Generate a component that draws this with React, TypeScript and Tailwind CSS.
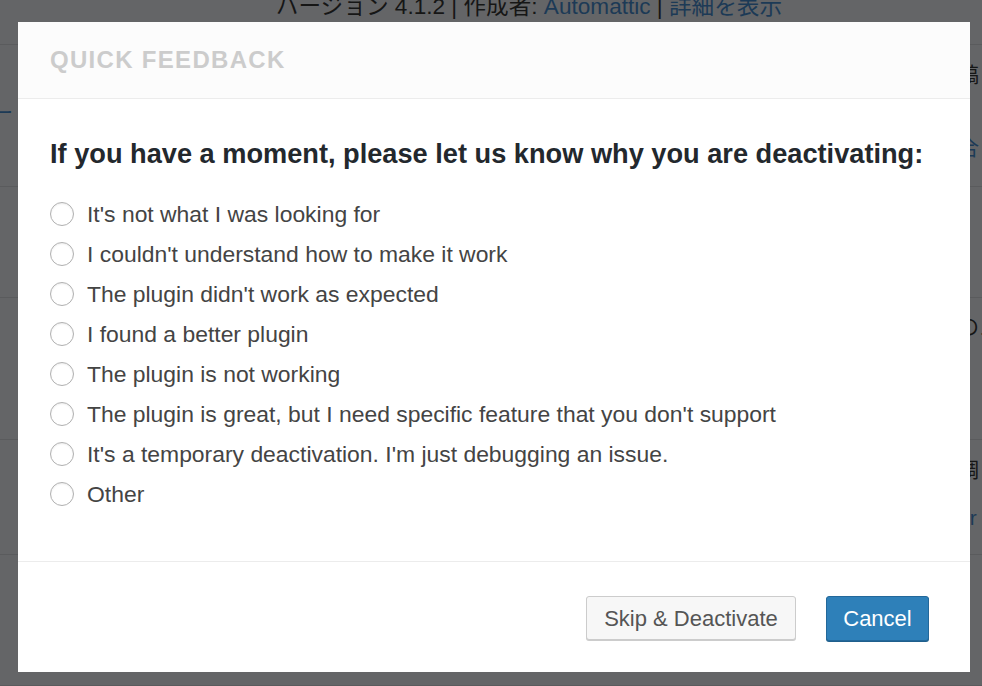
import { useState } from 'react';

const reasons = [
  "It's not what I was looking for",
  "I couldn't understand how to make it work",
  "The plugin didn't work as expected",
  'I found a better plugin',
  'The plugin is not working',
  "The plugin is great, but I need specific feature that you don't support",
  "It's a temporary deactivation. I'm just debugging an issue.",
  'Other',
];

// dimmed plugin list rows behind the modal
const rows = [
  { h: 'h-[142px]', left: 'ー', right: [{ t: '稿', mt: 'mt-[18px]' }, { t: '合', mt: 'mt-[49px]', link: true }] },
  { h: 'h-[111px]', left: '', right: [{ t: 'd', mt: 'mt-[19px]' }] },
  { h: 'h-[142px]', left: '', right: [{ t: 'のス', mt: 'mt-[17px]' }] },
  { h: 'h-[115px]', left: '', right: [{ t: '調', mt: 'mt-[18px]' }, { t: 'er', mt: 'mt-[24px]', link: true }] },
  { h: 'h-[131px]', left: '', right: [{ t: '|', mt: 'mt-[16px]' }] },
];

function Backdrop() {
  return (
    <div className="flex flex-col text-[21px] text-[#161616]">
      <div className="h-[45px] border-b border-[#5a5b5d] flex justify-center">
        <div className="-mt-[5px] ml-[76px] text-[22.6px] leading-[24px] whitespace-nowrap">
          バージョン 4.1.2 | 作成者: <span className="text-[#1c3a56]">Automattic</span> |{' '}
          <span className="text-[#1c3a56]">詳細を表示</span>
        </div>
      </div>
      {rows.map((r, i) => (
        <div key={i} className={`${r.h} border-b border-[#5a5b5d] flex justify-between`}>
          <div className="pt-[52px] -ml-[8px] text-[#1c3a56]">{r.left}</div>
          <div className="flex flex-col w-[24px] whitespace-nowrap">
            {r.right.map((s, j) => (
              <span key={j} className={`${s.mt} leading-[24px] ${s.link ? 'text-[#1c3a56]' : ''}`}>
                {s.t}
              </span>
            ))}
          </div>
        </div>
      ))}
    </div>
  );
}

export default function App() {
  const [picked, setPicked] = useState<number | null>(null);

  return (
    <div
      className="relative w-[982px] h-[686px] overflow-hidden bg-[#646567]"
      style={{ fontFamily: '"Liberation Sans", "Noto Sans CJK JP", Arial, sans-serif' }}
    >
      <Backdrop />

      <div className="absolute left-[18px] top-[22px] w-[952px] h-[650px] bg-white flex flex-col">
        <div className="h-[77px] bg-[#fcfcfc] border-b border-[#ececec] flex items-center px-[32px]">
          <h1 className="text-[24px] font-bold tracking-[1.3px] text-[#cccccc]">QUICK FEEDBACK</h1>
        </div>

        <div className="flex-1 px-[32px] pt-[39px] border-b border-[#ececec]">
          <h2 className="text-[27.2px] leading-[32px] font-bold text-[#23282d] whitespace-nowrap">
            If you have a moment, please let us know why you are deactivating:
          </h2>
          <ul className="mt-[24px] flex flex-col">
            {reasons.map((r, i) => (
              <li key={i}>
                <label className="h-[40px] flex items-center gap-[13px] cursor-pointer">
                  <input
                    type="radio"
                    name="reason"
                    className="hidden"
                    checked={picked === i}
                    onChange={() => setPicked(i)}
                  />
                  <span className="w-[24px] h-[24px] shrink-0 rounded-full border-[1.5px] border-[#b0b0b0] bg-white shadow-[inset_0_1px_2px_rgba(0,0,0,0.08)] flex items-center justify-center">
                    {picked === i && <span className="w-[10px] h-[10px] rounded-full bg-[#1e8cbe]" />}
                  </span>
                  <span className="text-[22.9px] text-[#444444] whitespace-nowrap">{r}</span>
                </label>
              </li>
            ))}
          </ul>
        </div>

        <div className="h-[110px] flex justify-end items-start gap-[30px] pt-[34px] pr-[41px]">
          <button className="h-[44px] w-[210px] rounded-[3px] border border-[#cccccc] bg-[#f7f7f7] shadow-[0_1px_0_#cccccc] text-[22px] text-[#555555]">
            Skip &amp; Deactivate
          </button>
          <button className="h-[45px] w-[103px] rounded-[3px] border border-[#23689a] bg-[#2e80b9] shadow-[0_1px_0_#1f5f8c] text-[22px] text-white">
            Cancel
          </button>
        </div>
      </div>
    </div>
  );
}
